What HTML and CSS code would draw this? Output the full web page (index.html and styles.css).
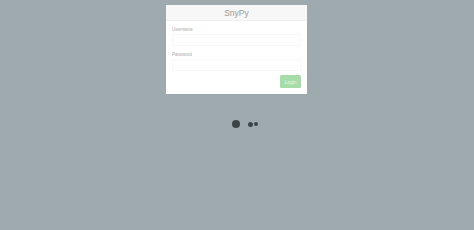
FILE: index.html
```html
<!DOCTYPE html>
<html lang="en">
<head>
  <meta charset="UTF-8">
  <title>SnyPy</title>
  <link rel="stylesheet" href="styles.css">
</head>
<body>
  <main class="page">
    <div class="login">
      <div class="login-head">SnyPy</div>
      <form action="#" class="login-form">
        <label for="user">Username</label>
        <input type="text" id="user" class="field">
        <label for="pass">Password</label>
        <input type="password" id="pass" class="field">
        <div class="actions">
          <button type="button" class="btn">Login</button>
        </div>
      </form>
    </div>

    <div class="loader">
      <span class="dot big"></span>
      <span class="dot mid"></span>
      <span class="dot small"></span>
    </div>
  </main>
</body>
</html>
```

FILE: styles.css
```css
* {
  padding: 0;
  margin: 0;
  box-sizing: border-box;
}

html {
  font-family: "Liberation Sans", Arial, sans-serif;
}

body {
  background-color: #9eaaad;
  min-height: 100vh;
}

.page {
  display: flex;
  flex-direction: column;
  align-items: center;
  padding-top: 5px;
}

.login {
  width: 141px;
  background-color: #fff;
  margin-left: -1px;
}

.login-head {
  height: 16px;
  line-height: 16px;
  text-align: center;
  font-size: 8.5px;
  color: #9a9a9a;
  background-color: #f7f7f7;
  border-bottom: 1px solid #f0f0f0;
}

.login-form {
  display: flex;
  flex-direction: column;
  padding: 6px 6px 6px;
}

.login-form label {
  font-size: 4.5px;
  color: #aaa;
  line-height: 6px;
  margin-bottom: 1px;
}

.field {
  height: 12px;
  border: 1px solid #f7f7f7;
  border-radius: 1px;
  margin-bottom: 6px;
  outline: none;
}

.actions {
  display: flex;
  justify-content: flex-end;
  margin-top: -2px;
}

.btn {
  width: 21px;
  height: 13px;
  border: none;
  border-radius: 1.5px;
  background-color: #a5dca8;
  color: #eaf8ea;
  font-family: inherit;
  font-size: 5px;
}

.loader {
  display: flex;
  align-items: center;
  margin-top: 26px;
  margin-left: 15px;
}

.dot {
  display: block;
  border-radius: 50%;
  background-color: #3b4548;
}

.big {
  width: 8px;
  height: 8px;
  margin-right: 8px;
}

.mid {
  width: 5px;
  height: 5px;
  margin-right: 1px;
}

.small {
  width: 4px;
  height: 4px;
}
```
